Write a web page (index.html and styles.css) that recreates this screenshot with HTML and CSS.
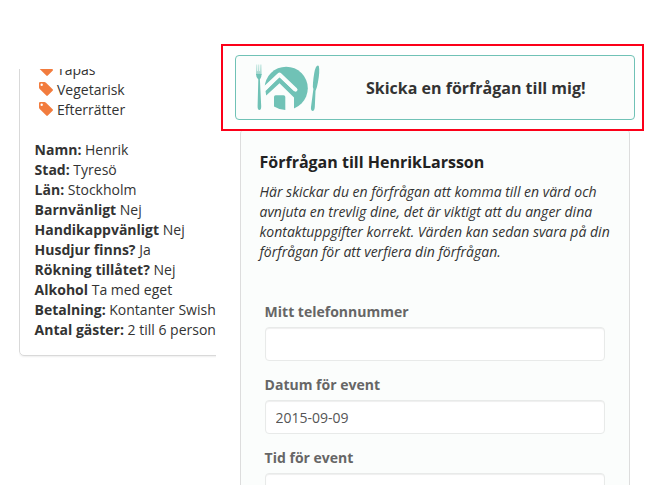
FILE: index.html
```html
<!DOCTYPE html>
<html lang="sv">
<head>
<meta charset="utf-8">
<title>Förfrågan</title>
<link rel="stylesheet" href="styles.css">
</head>
<body>
<svg class="defs" width="0" height="0"><symbol id="tag" viewBox="0 0 14 14"><path fill-rule="evenodd" d="M0 1.2Q0 0 1.2 0H5.4Q6.3 0 7 .7L13.6 7.3Q14.3 8 13.6 8.8L8.8 13.6Q8 14.3 7.3 13.6L.7 7Q0 6.300 0 5.400ZM2.700 1.500A1.200 1.200 0 1 0 2.700 3.900A1.200 1.200 0 1 0 2.700 1.500Z"/></symbol></svg>
<div class="page">
  <aside class="side">
    <div class="clip">
      <div class="card">
        <ul class="tags">
          <li><svg class="tag"><use href="#tag"/></svg>Tapas</li>
          <li><svg class="tag"><use href="#tag"/></svg>Vegetarisk</li>
          <li><svg class="tag"><use href="#tag"/></svg>Efterrätter</li>
        </ul>
        <div><b>Namn:</b> Henrik</div>
        <div><b>Stad:</b> Tyresö</div>
        <div><b>Län:</b> Stockholm</div>
        <div><b>Barnvänligt</b> Nej</div>
        <div><b>Handikappvänligt</b> Nej</div>
        <div><b>Husdjur finns?</b> Ja</div>
        <div><b>Rökning tillåtet?</b> Nej</div>
        <div><b>Alkohol</b> Ta med eget</div>
        <div><b>Betalning:</b> Kontanter Swish</div>
        <div><b>Antal gäster:</b> 2 till 6 person</div>
      </div>
    </div>
  </aside>
  <main class="main">
    <div class="highlight">
      <a class="request">
        <svg class="logo" viewBox="0 0 66 50" width="66" height="50">
          <defs><linearGradient id="tines" x1="0" y1="0" x2="0" y2="1"><stop offset="0" stop-color="#d3ede8"/><stop offset="1" stop-color="#9dd5cc"/></linearGradient></defs>
          <path fill="url(#tines)" d="M1 1.500H2.300V8H3V1.500H4.300V8H5V1.500H6.600V12H1Z"/>
          <path fill="#70c2b6" d="M1 11H6.600Q6.600 14.500 4.900 16.500L6.200 43Q6.300 47 4.400 47Q2.500 47 2.600 43L3.300 16.500Q1 14.500 1 11Z"/>
          <circle cx="31.200" cy="25.300" r="21.600" fill="#70c2b6"/>
          <path fill="#fbfdfc" d="M8 27L24.500 11L39 25V50H8Z"/>
          <path fill="#70c2b6" d="M10.500 28L24.500 14L39 28V34.500L24.500 20.300L11.200 32.500Z"/>
          <path fill="none" stroke="#fbfdfc" stroke-width="4" stroke-linecap="round" stroke-linejoin="round" d="M9 26L24.500 11.500L40.500 26.600"/>
          <path fill="#70c2b6" d="M19 34Q19 32.300 20.700 32.300H28.500Q30.300 32.300 30.300 34V46.900Q23.500 46.500 19 43.500Z"/>
          <path fill="#70c2b6" d="M63.800 3Q65 8 63 19Q62 25 60.500 28L59.800 44Q59.500 48 57.500 48Q55.600 47.500 56 44L58.400 26Q57.500 24 58 20Q59 8 61 4Q62.500 1.500 63.800 3Z"/>
        </svg>
        <span class="request-text">Skicka en förfrågan till mig!</span>
      </a>
    </div>
    <section class="panel">
      <h2>Förfrågan till HenrikLarsson</h2>
      <p>Här skickar du en förfrågan att komma till en värd och avnjuta en trevlig dine, det är viktigt att du anger dina kontaktuppgifter korrekt. Värden kan sedan svara på din förfrågan för att verfiera din förfrågan.</p>
      <form>
        <label>Mitt telefonnummer<input type="text"></label>
        <label>Datum för event<input type="text" value="2015-09-09"></label>
        <label>Tid för event<input type="text"></label>
      </form>
    </section>
  </main>
</div>
</body>
</html>
```
FILE: styles.css
```css
* { box-sizing: border-box; }
body {
  margin: 0;
  background: #fff;
  color: #333;
  font: 14px/20px "Open Sans", sans-serif;
}
.defs { display: block; }
.page { display: flex; height: 485px; overflow: hidden; }
.side { width: 216px; padding: 69px 0 0 19px; flex: none; }
.clip { overflow: hidden; padding-bottom: 4px; }
.card {
  width: 240px;
  margin-top: -25px;
  padding: 15px 15px 15px 14.6px;
  border: 1px solid #d9d9d9;
  border-radius: 5px;
  box-shadow: 0 1px 2px rgba(0, 0, 0, .07);
  white-space: nowrap;
}
.tags { list-style: none; margin: 0 0 20px; padding: 0 0 0 4.4px; }
.tags li { display: flex; }
.tag { width: 14px; height: 14px; margin: 2px 4px 0 0; fill: #f27c3e; }
.main { width: 423px; margin: 44px 0 0 5px; flex: none; }
.highlight {
  position: relative;
  z-index: 1;
  height: 87px;
  padding: 9px 7px 0 12px;
  border: 2px solid #fc0019;
}
.request {
  display: flex;
  align-items: center;
  height: 65px;
  padding-left: 19px;
  border: 1px solid #70c2b6;
  border-radius: 4px;
  background: #fbfdfc;
}
.request-text { margin-left: 45px; font-size: 16px; font-weight: 700; }
.panel {
  width: 390px;
  height: 400px;
  margin: -1px 0 0 19px;
  padding: 21px 16px 20px 18.5px;
  border: 1px solid #ddd;
  border-top: 0;
  border-radius: 4px;
  background: #fbfdfc;
}
h2 { margin: 0 0 9px; font-size: 16px; line-height: 22px; color: #222; }
p { margin: 0; font-style: italic; }
form { padding: 40px 0 0 5.5px; }
label { display: block; margin-bottom: 14px; font-weight: 700; color: #666; text-indent: -.4px; }
input {
  display: block;
  width: 340px;
  height: 34px;
  margin-top: 5px;
  padding: 0 9.5px;
  border: 1px solid #e8eae9;
  border-radius: 4px;
  box-shadow: inset 0 1px 1px rgba(0, 0, 0, .065);
  background: #fff;
  color: #555;
  font: 14px "Open Sans", sans-serif;
}
```
